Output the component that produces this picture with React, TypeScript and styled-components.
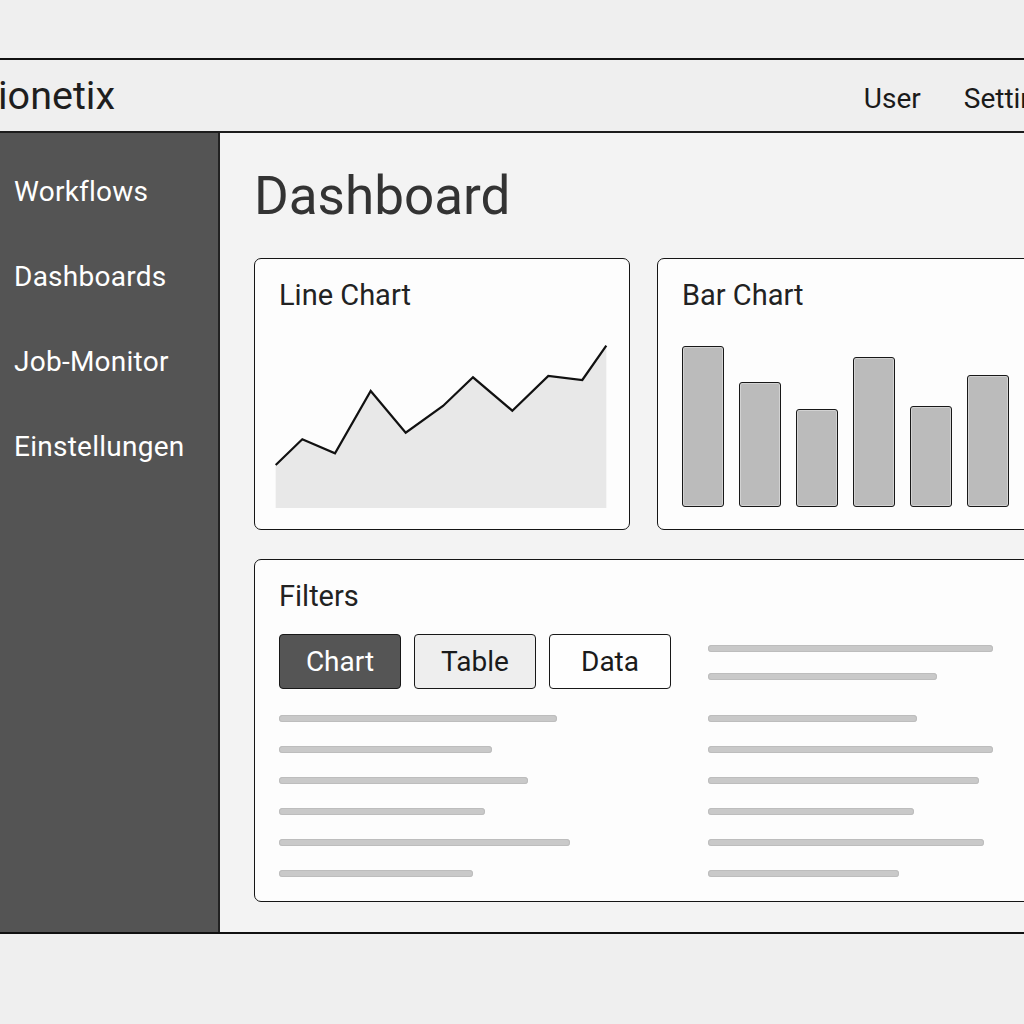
import React from "react";
import styled, { createGlobalStyle } from "styled-components";

const Global = createGlobalStyle`
  *, *::before, *::after { box-sizing: border-box; }
  html, body {
    margin: 0;
    padding: 0;
    background: #efefef;
    overflow: hidden;
    font-family: Roboto, "Liberation Sans", Arial, sans-serif;
  }
`;

const Page = styled.div`
  width: 1024px;
  height: 1024px;
  overflow: hidden;
  padding-top: 58px;
  background: #efefef;
`;

const Window = styled.div`
  width: 1100px;
  border-top: 2px solid #111;
  border-bottom: 2px solid #111;
`;

const Header = styled.header`
  height: 73px;
  border-bottom: 2px solid #1c1c1c;
  background: #efefef;
  display: flex;
  align-items: center;
  justify-content: space-between;
  padding: 0 34px 0 0;
`;

const Logo = styled.div`
  font-size: 39.5px;
  color: #1e1e1e;
  margin-left: -2px;
`;

const Nav = styled.nav`
  display: flex;
  gap: 43px;
  margin-top: 5px;
`;

const NavLink = styled.span`
  font-size: 28px;
  color: #1a1a1a;
`;

const Body = styled.div`
  display: grid;
  grid-template-columns: 220px 1fr;
  height: 799px;
`;

const Sidebar = styled.aside`
  background: #545454;
  border-right: 2px solid #222;
  padding: 43px 0 0 14px;
  display: flex;
  flex-direction: column;
  gap: 53px;
`;

const SideItem = styled.div`
  font-size: 28px;
  line-height: 32px;
  color: #fff;
  letter-spacing: 0.25px;
`;

const Main = styled.main`
  background: #f3f3f3;
  padding: 33px 0 0 34px;
`;

const Title = styled.h1`
  margin: 0;
  font-size: 53px;
  line-height: 60px;
  font-weight: 400;
  color: #333;
`;

const CardGrid = styled.div`
  margin-top: 32px;
  display: grid;
  grid-template-columns: 376px 376px;
  column-gap: 27px;
  row-gap: 29px;
`;

const Card = styled.section`
  height: 272px;
  border: 1.75px solid #151515;
  border-radius: 7px;
  background: #fdfdfd;
  padding: 20px 24px 22px;
  display: flex;
  flex-direction: column;
`;

const CardTitle = styled.h2`
  margin: 0;
  font-size: 29px;
  line-height: 32px;
  font-weight: 400;
  color: #222;
  flex-shrink: 0;
`;

const ChartSvg = styled.svg`
  display: block;
  flex-shrink: 0;
  margin: 28.5px 0 0 -8px;
`;

const Bars = styled.div`
  margin-top: auto;
  display: flex;
  align-items: flex-end;
  gap: 15px;
`;

const Bar = styled.div<{ $h: number }>`
  width: 42px;
  height: ${(p) => p.$h}px;
  flex-shrink: 0;
  background: #bbbbbb;
  border: 1.75px solid #181818;
  border-radius: 3px;
  box-shadow: inset 0 0 0 1px rgba(255, 255, 255, 0.35);
`;

const FiltersCard = styled(Card)`
  grid-column: 1 / -1;
  height: 343px;
`;

const FilterBody = styled.div`
  margin-top: 21.5px;
  display: grid;
  grid-template-columns: 429px 1fr;
`;

const Column = styled.div<{ $top?: number }>`
  display: flex;
  flex-direction: column;
  padding-top: ${(p) => p.$top ?? 0}px;
`;

const ButtonRow = styled.div`
  display: flex;
  gap: 13px;
`;

const ToggleButton = styled.button<{ $variant: "active" | "muted" | "plain" }>`
  width: 122px;
  height: 55px;
  border: 1.75px solid #181818;
  border-radius: 4px;
  font-family: Roboto, "Liberation Sans", Arial, sans-serif;
  font-size: 28px;
  padding: 0;
  color: ${(p) => (p.$variant === "active" ? "#fff" : "#1a1a1a")};
  background: ${(p) =>
    p.$variant === "active" ? "#555" : p.$variant === "muted" ? "#eeeeee" : "#fefefe"};
`;

const LineList = styled.div<{ $mt: number; $gap: number }>`
  margin-top: ${(p) => p.$mt}px;
  display: flex;
  flex-direction: column;
  gap: ${(p) => p.$gap}px;
`;

const TextLine = styled.div<{ $w: number }>`
  width: ${(p) => p.$w}px;
  height: 7px;
  border-radius: 4px;
  background: #c9c9c9;
  box-shadow: inset 0 0 0 1px #bdbdbd;
`;

const linePoints: [number, number][] = [
  [4.7, 125],
  [31.3, 99.3],
  [64, 113.3],
  [99.7, 51],
  [134.7, 92.7],
  [172, 66],
  [202, 37.3],
  [241.3, 70.7],
  [277.3, 36],
  [311.3, 40],
  [335.3, 5.7],
];

const LineChart = () => {
  const pts = linePoints.map(([x, y]) => `${x},${y}`).join(" ");
  const area = `M4.7,168 L${linePoints.map(([x, y]) => `${x},${y}`).join(" L")} L335.3,168 Z`;
  return (
    <ChartSvg width={340} height={172} viewBox="0 0 340 172">
      <path d={area} fill="#e8e8e8" />
      <polyline points={pts} fill="none" stroke="#111" strokeWidth={2.2} strokeLinejoin="miter" />
    </ChartSvg>
  );
};

const bars = [161, 125, 98, 150, 101, 132];
const leftLines = [278, 213, 249, 206, 291, 194];
const rightTop = [285, 229];
const rightRest = [209, 285, 271, 206, 276, 191];

export default function App() {
  return (
    <Page>
      <Global />
      <Window>
        <Header>
          <Logo>ionetix</Logo>
          <Nav>
            <NavLink>User</NavLink>
            <NavLink>Settings</NavLink>
          </Nav>
        </Header>
        <Body>
          <Sidebar>
            <SideItem>Workflows</SideItem>
            <SideItem>Dashboards</SideItem>
            <SideItem>Job-Monitor</SideItem>
            <SideItem>Einstellungen</SideItem>
          </Sidebar>
          <Main>
            <Title>Dashboard</Title>
            <CardGrid>
              <Card>
                <CardTitle>Line Chart</CardTitle>
                <LineChart />
              </Card>
              <Card>
                <CardTitle>Bar Chart</CardTitle>
                <Bars>
                  {bars.map((h, i) => (
                    <Bar key={i} $h={h} />
                  ))}
                </Bars>
              </Card>
              <FiltersCard>
                <CardTitle>Filters</CardTitle>
                <FilterBody>
                  <Column>
                    <ButtonRow>
                      <ToggleButton $variant="active">Chart</ToggleButton>
                      <ToggleButton $variant="muted">Table</ToggleButton>
                      <ToggleButton $variant="plain">Data</ToggleButton>
                    </ButtonRow>
                    <LineList $mt={26} $gap={24}>
                      {leftLines.map((w, i) => (
                        <TextLine key={i} $w={w} />
                      ))}
                    </LineList>
                  </Column>
                  <Column $top={11}>
                    <LineList $mt={0} $gap={21}>
                      {rightTop.map((w, i) => (
                        <TextLine key={i} $w={w} />
                      ))}
                    </LineList>
                    <LineList $mt={35.4} $gap={24}>
                      {rightRest.map((w, i) => (
                        <TextLine key={i} $w={w} />
                      ))}
                    </LineList>
                  </Column>
                </FilterBody>
              </FiltersCard>
            </CardGrid>
          </Main>
        </Body>
      </Window>
    </Page>
  );
}
